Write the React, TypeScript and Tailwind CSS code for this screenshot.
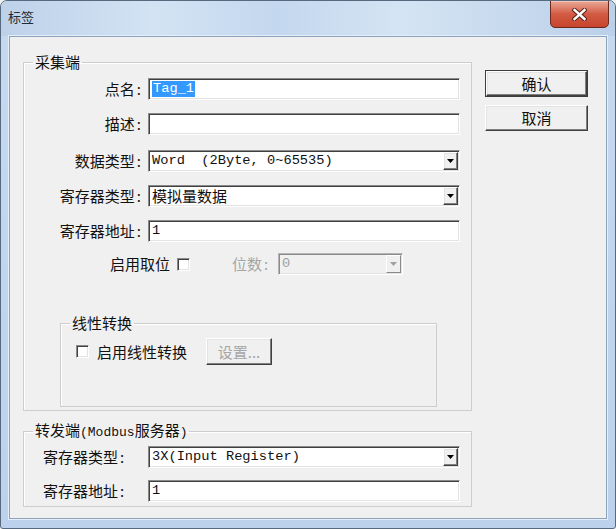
import React from 'react';

const cjk = "font-['Noto_Sans_CJK_SC',sans-serif]";
const mono = "font-['Liberation_Mono','Noto_Sans_CJK_SC',monospace]";

const sunken =
  'border border-t-[#8a8a8a] border-l-[#8a8a8a] border-b-white border-r-white shadow-[inset_1px_1px_0_#404040,inset_-1px_-1px_0_#e3e3e3]';
const raised =
  'border border-t-white border-l-white border-b-[#404040] border-r-[#404040] shadow-[inset_-1px_-1px_0_#808080,inset_1px_1px_0_#e3e3e3] bg-[#f0f0f0]';

const Arrow: React.FC<{ color?: string }> = ({ color = '#000' }) => (
  <svg width="7" height="4" viewBox="0 0 7 4">
    <path d="M0 0h7L3.5 4z" fill={color} />
  </svg>
);

const TextBox: React.FC<{ value?: string; selected?: boolean }> = ({ value = '', selected }) => (
  <div className={`h-[22px] w-[312px] bg-white flex items-center pl-[3px] ${sunken}`}>
    {selected ? (
      <span className={`${mono} text-[13.7px] leading-[16px] bg-[#3399ff] text-white px-[1px]`}>{value}</span>
    ) : (
      <span className={`${mono} text-[13.7px] leading-[16px] text-[#111]`}>{value}</span>
    )}
  </div>
);

const Combo: React.FC<{ value: string; cjkValue?: boolean }> = ({ value, cjkValue }) => (
  <div className={`h-[22px] w-[312px] bg-white flex p-[1px] ${sunken}`}>
    <div
      className={`flex-1 flex items-center pl-[2px] text-[#111] whitespace-pre ${
        cjkValue ? `${cjk} text-[15px] leading-[18px]` : `${mono} text-[13.7px] leading-[16px]`
      }`}
    >
      {value}
    </div>
    <div className={`w-[15px] flex items-center justify-center ${raised}`}>
      <Arrow />
    </div>
  </div>
);

const CheckBox: React.FC = () => <div className={`w-[13px] h-[13px] bg-white ${sunken}`} />;

// label text with the wide half-width colon of the original dialog font
const Colon: React.FC<{ text: string }> = ({ text }) => (
  <>
    {text}
    <span className="ml-[2px]">:</span>
  </>
);

const Label: React.FC<{ text: string }> = ({ text }) => (
  <div className={`w-[117px] text-right ${cjk} text-[15px] leading-[18px] text-[#111]`}>
    <Colon text={text} />
  </div>
);

export default function App() {
  return (
    <div className="w-[616px] h-[529px] bg-[#f0f0f0]">
      <div className="w-[616px] h-[529px] flex flex-col rounded-t-[7px] rounded-b-[3px] border border-[#56697f] bg-gradient-to-b from-[#c6d9ef] to-[#bcd2ec] overflow-hidden">
        {/* title bar */}
        <div className="h-[35px] flex justify-between bg-[linear-gradient(90deg,#bdd1e9,#d3e3f4_25%,#c3d7ee_45%,#d5e4f4_65%,#c9dbef_80%,#bbd0e9)]">
          <div className={`pl-[7px] pt-[8px] ${cjk} text-[13px] leading-[16px] text-[#1e2a36]`}>标签</div>
          <div className="mr-[6px] w-[59px] h-[28px] -mt-[1px] rounded-b-[5px] border border-[#6b2a1e] bg-gradient-to-b from-[#e9a898] via-[#d25a43] to-[#c8452c] shadow-[inset_0_1px_0_#f3c7bc] flex items-center justify-center">
            <svg width="15" height="13" viewBox="0 0 15 13">
              <path d="M2.5 2l10 9M12.5 2l-10 9" stroke="#5a2418" strokeWidth="4.4" strokeLinecap="square" />
              <path d="M2.5 2l10 9M12.5 2l-10 9" stroke="#ffffff" strokeWidth="2.4" strokeLinecap="square" />
            </svg>
          </div>
        </div>

        {/* client area */}
        <div className="flex-1 mx-[8px] mb-[9px] border border-[#8ea3bc] bg-[#f0f0f0] shadow-[0_0_0_1px_#e4eefa]">
          <div className="flex pl-[13px] pt-[17px]">
            {/* left column */}
            <div className="w-[449px] flex flex-col">
              <fieldset className="h-[357px] border border-[#cdcdcd] shadow-[inset_1px_1px_0_#ffffff]">
                <legend className={`ml-[9px] px-[2px] ${cjk} text-[15px] leading-[16px] text-[#111]`}>采集端</legend>
                <div className="pt-[8px] flex flex-col">
                  <div className="flex items-center h-[22px]">
                    <Label text="点名" />
                    <div className="ml-[7px]">
                      <TextBox value="Tag_1" selected />
                    </div>
                  </div>
                  <div className="flex items-center h-[22px] mt-[13px]">
                    <Label text="描述" />
                    <div className="ml-[7px]">
                      <TextBox />
                    </div>
                  </div>
                  <div className="flex items-center h-[22px] mt-[15px]">
                    <Label text="数据类型" />
                    <div className="ml-[7px]">
                      <Combo value="Word  (2Byte, 0~65535)" />
                    </div>
                  </div>
                  <div className="flex items-center h-[22px] mt-[13px]">
                    <Label text="寄存器类型" />
                    <div className="ml-[7px]">
                      <Combo value="模拟量数据" cjkValue />
                    </div>
                  </div>
                  <div className="flex items-center h-[22px] mt-[13px]">
                    <Label text="寄存器地址" />
                    <div className="ml-[7px]">
                      <TextBox value="1" />
                    </div>
                  </div>
                  <div className="flex items-center h-[22px] mt-[11px]">
                    <div className={`ml-[86px] w-[62px] ${cjk} text-[15px] leading-[18px] text-[#111]`}>启用取位</div>
                    <div className="ml-[5px]">
                      <CheckBox />
                    </div>
                    <div className={`ml-[42px] w-[46px] ${cjk} text-[15px] leading-[18px] text-[#a6a6a6]`}>
                      <Colon text="位数" />
                    </div>
                    <div className="w-[125px] h-[22px] flex p-[1px] bg-[#f0f0f0] border border-t-[#b5b5b5] border-l-[#b5b5b5] border-b-white border-r-white shadow-[inset_1px_1px_0_#8a8a8a,inset_-1px_-1px_0_#e3e3e3]">
                      <div className={`flex-1 flex items-center pl-[2px] ${mono} text-[13.7px] leading-[16px] text-[#a0a0a0]`}>0</div>
                      <div className="w-[15px] flex items-center justify-center border border-t-white border-l-white border-b-[#8a8a8a] border-r-[#8a8a8a]">
                        <Arrow color="#a0a0a0" />
                      </div>
                    </div>
                  </div>

                  <fieldset className="ml-[36px] mt-[40px] w-[377px] h-[92px] border border-[#cdcdcd] shadow-[inset_1px_1px_0_#ffffff]">
                    <legend className={`ml-[9px] px-[2px] ${cjk} text-[15px] leading-[16px] text-[#111]`}>线性转换</legend>
                    <div className="pt-[7px] flex items-center h-[34px]">
                      <div className="ml-[15px]">
                        <CheckBox />
                      </div>
                      <div className={`ml-[8px] ${cjk} text-[15px] leading-[18px] text-[#111]`}>启用线性转换</div>
                      <div className={`ml-[19px] w-[66px] h-[27px] flex items-center justify-center ${raised}`}>
                        <span className={`${cjk} text-[15px] leading-[18px] text-[#a6a6a6]`}>设置...</span>
                      </div>
                    </div>
                  </fieldset>
                </div>
              </fieldset>

              <fieldset className="mt-[11px] h-[85px] border border-[#cdcdcd] shadow-[inset_1px_1px_0_#ffffff]">
                <legend className={`ml-[9px] px-[2px] ${cjk} text-[15px] leading-[16px] text-[#111] whitespace-pre`}>
                  转发端<span className={`${mono} text-[13px]`}>(Modbus</span>服务器<span className={`${mono} text-[13px]`}>)</span>
                </legend>
                <div className="pt-[5px] pl-[19px] flex flex-col">
                  <div className="flex items-center h-[22px]">
                    <div className={`w-[105px] ${cjk} text-[15px] leading-[18px] text-[#111]`}>
                      <Colon text="寄存器类型" />
                    </div>
                    <Combo value="3X(Input Register)" />
                  </div>
                  <div className="flex items-center h-[22px] mt-[12px]">
                    <div className={`w-[105px] ${cjk} text-[15px] leading-[18px] text-[#111]`}>
                      <Colon text="寄存器地址" />
                    </div>
                    <TextBox value="1" />
                  </div>
                </div>
              </fieldset>
            </div>

            {/* right column */}
            <div className="ml-[13px] pt-[16px] flex flex-col gap-[8px]">
              <div className="w-[103px] h-[27px] border border-[#3c3c3c]">
                <div className={`w-full h-full flex items-center justify-center ${raised}`}>
                  <span className={`${cjk} text-[15px] leading-[18px] text-[#111]`}>确认</span>
                </div>
              </div>
              <div className={`w-[103px] h-[26px] flex items-center justify-center ${raised}`}>
                <span className={`${cjk} text-[15px] leading-[18px] text-[#111]`}>取消</span>
              </div>
            </div>
          </div>
        </div>
      </div>
    </div>
  );
}
